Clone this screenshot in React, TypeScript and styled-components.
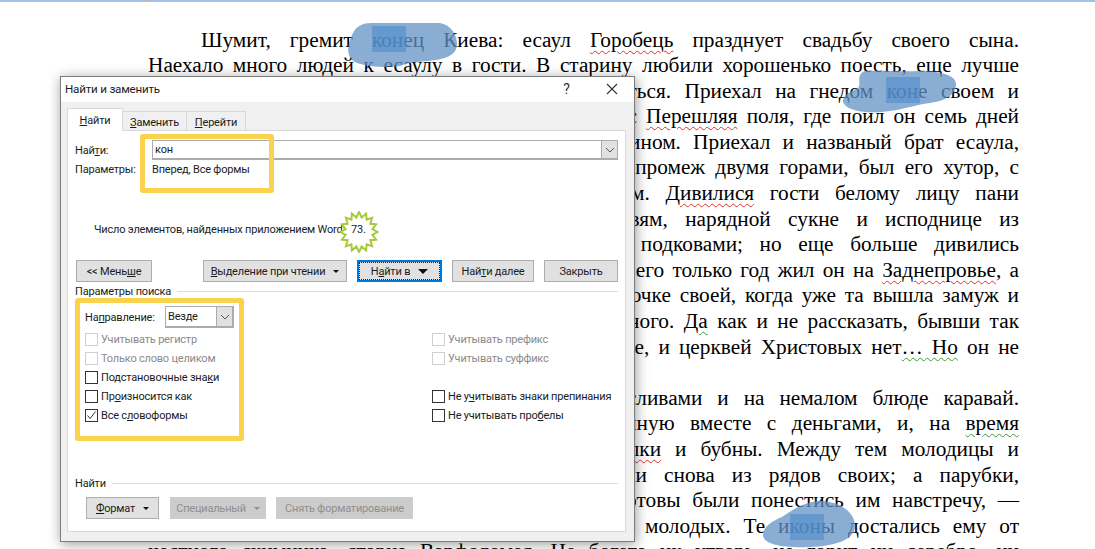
import React from 'react';
import styled, { createGlobalStyle } from 'styled-components';

const Global = createGlobalStyle`
  html, body { margin: 0; padding: 0; background: #ffffff; overflow: hidden; }
`;

const Page = styled.div`
  position: relative;
  width: 1095px;
  height: 549px;
  overflow: hidden;
  background: #ffffff;
`;

const TopBar = styled.div`
  height: 2px;
  background: #a3c1e9;
  padding-left: 143px;
`;

const RulerMark = styled.div`
  width: 9px;
  height: 2px;
  background: #b4bccb;
`;

// текст документа
const Doc = styled.div`
  width: 871px;
  margin-left: 148px;
  padding-top: 25.5px;
  font-family: "Liberation Serif", serif;
  font-size: 21.3px;
  line-height: 25.6px;
  color: #000000;
`;

const Line = styled.div<{ $indent?: boolean; $last?: boolean }>`
  height: 25.6px;
  text-align: justify;
  text-align-last: ${(p) => (p.$last ? 'left' : 'justify')};
  text-indent: ${(p) => (p.$indent ? '53px' : '0')};
`;

const Typo = styled.span<{ $color: string }>`
  text-decoration: underline wavy ${(p) => p.$color};
  text-decoration-thickness: 1px;
  text-underline-offset: 3px;
`;

const Overlay = styled.svg`
  position: absolute;
  left: 0;
  top: 0;
  pointer-events: none;
`;

const Dialog = styled.div`
  position: absolute;
  left: 60px;
  top: 76px;
  width: 575px;
  height: 466px;
  box-sizing: border-box;
  display: flex;
  flex-direction: column;
  background: #f0f0f0;
  border: 1px solid #7d7d7d;
  box-shadow: 1px 2px 12px rgba(0, 0, 0, 0.4);
  font-family: Roboto, sans-serif;
  font-size: 11px;
  letter-spacing: -0.2px;
  color: #1c1c1c;
  u { text-underline-offset: 1px; }
`;

const TitleBar = styled.div`
  height: 25px;
  box-sizing: border-box;
  padding: 0 0 2px 4px;
  flex: none;
  display: flex;
  align-items: center;
  background: #ffffff;
  font-size: 11.6px;
`;

const TitleText = styled.div`
  flex: 1;
`;

const TitleBtn = styled.div`
  width: 45px;
  display: flex;
  justify-content: center;
  align-items: center;
  font-size: 14px;
  color: #333333;
`;

const Tabs = styled.div`
  display: flex;
  align-items: flex-end;
  height: 29px;
  flex: none;
  padding-left: 6px;
  margin-bottom: -1px;
  position: relative;
  z-index: 1;
`;

const Tab = styled.div<{ $w: number; $active?: boolean }>`
  box-sizing: border-box;
  width: ${(p) => p.$w}px;
  height: ${(p) => (p.$active ? '23px' : '20px')};
  padding-top: ${(p) => (p.$active ? '3px' : '2px')};
  text-align: center;
  background: ${(p) => (p.$active ? '#ffffff' : '#f0f0f0')};
  border: 1px solid #d9d9d9;
  border-bottom: ${(p) => (p.$active ? 'none' : '1px solid #d9d9d9')};
  margin-left: ${(p) => (p.$active ? '0' : '-1px')};
  line-height: 17px;
`;

const Panel = styled.div`
  flex: 1;
  margin: 0 8px 9px 6px;
  padding: 9px 7px 0 7px;
  background: #ffffff;
  border: 1px solid #d9d9d9;
  display: flex;
  flex-direction: column;
`;

const FindRow = styled.div`
  display: flex;
  align-items: center;
  height: 20px;
`;

const FieldLabel = styled.div`
  width: 77px;
  flex: none;
`;

const Field = styled.div`
  flex: 1;
  height: 20px;
  box-sizing: border-box;
  border: 1px solid #acacac;
  border-width: 1px 1px 2px 1px;
  display: flex;
  align-items: center;
  padding-left: 2px;
`;

const FieldValue = styled.div`
  flex: 1;
`;

const ArrowBox = styled.div`
  width: 16px;
  height: 100%;
  box-sizing: border-box;
  background: #e1e1e1;
  border-left: 1px solid #acacac;
  display: flex;
  align-items: center;
  justify-content: center;
`;

const ParamsRow = styled.div`
  display: flex;
  align-items: center;
  height: 16px;
  margin-top: 1px;
`;

const CountRow = styled.div`
  position: relative;
  height: 16px;
  margin-top: 45px;
  margin-left: 19px;
  line-height: 16px;
`;

const CountValue = styled.span`
  position: absolute;
  left: 257px;
  top: 0;
  z-index: 1;
`;

const Star = styled.svg`
  position: absolute;
  left: 245px;
  top: -11px;
`;

const ButtonRow = styled.div`
  display: flex;
  margin: 22px 0 0 1px;
  height: 22px;
`;

const Button = styled.div<{ $w: number; $gap?: number; $disabled?: boolean }>`
  width: ${(p) => p.$w}px;
  margin-left: ${(p) => p.$gap ?? 0}px;
  box-sizing: border-box;
  display: flex;
  align-items: center;
  justify-content: center;
  gap: 8px;
  white-space: nowrap;
  background: ${(p) => (p.$disabled ? '#cccccc' : '#e1e1e1')};
  border: 1px solid ${(p) => (p.$disabled ? '#cccccc' : '#adadad')};
  color: ${(p) => (p.$disabled ? '#8f8f8f' : '#1c1c1c')};
`;

const FocusButton = styled(Button)`
  border: 2px solid #0078d7;
  outline: 1px dotted #222222;
  outline-offset: -3px;
`;

const Caret = styled.span<{ $small?: boolean; $disabled?: boolean }>`
  width: 0;
  height: 0;
  border-left: ${(p) => (p.$small ? 3 : 5)}px solid transparent;
  border-right: ${(p) => (p.$small ? 3 : 5)}px solid transparent;
  border-top: ${(p) => (p.$small ? 3 : 5)}px solid ${(p) => (p.$disabled ? '#8f8f8f' : '#111111')};
`;

const GroupHead = styled.div<{ $top: number }>`
  display: flex;
  align-items: center;
  height: 16px;
  margin-top: ${(p) => p.$top}px;
  gap: 6px;
  &::after {
    content: "";
    flex: 1;
    height: 1px;
    background: #dcdcdc;
  }
`;

const Options = styled.div`
  display: grid;
  grid-template-columns: 347px 1fr;
  margin-left: 10px;
  margin-top: 7px;
`;

const OptionCol = styled.div<{ $offset?: number }>`
  padding-top: ${(p) => p.$offset ?? 0}px;
`;

const DirRow = styled.div`
  display: flex;
  align-items: center;
  height: 22px;
  margin-bottom: 1.5px;
`;

const DirLabel = styled.div`
  width: 80px;
`;

const DirSelect = styled.div`
  width: 69px;
  height: 22px;
  box-sizing: border-box;
  border: 1px solid #acacac;
  border-width: 1px 2px 2px 1px;
  display: flex;
  align-items: center;
  padding-left: 2px;
`;

const Option = styled.div<{ $disabled?: boolean }>`
  display: flex;
  align-items: center;
  height: 19px;
  gap: 3px;
  white-space: nowrap;
  color: ${(p) => (p.$disabled ? '#8a8a8a' : '#1c1c1c')};
`;

const Box = styled.span<{ $disabled?: boolean }>`
  width: 13px;
  height: 13px;
  box-sizing: border-box;
  flex: none;
  border: 1px solid ${(p) => (p.$disabled ? '#cfcfcf' : '#333333')};
  display: flex;
  align-items: center;
  justify-content: center;
`;

const Spacer = styled.div`
  height: 19px;
`;

const FormatRow = styled.div`
  display: flex;
  height: 22px;
  margin-top: 6px;
  margin-left: 11px;
`;

const Frame = styled.div<{ $x: number; $y: number; $w: number; $h: number }>`
  position: absolute;
  left: ${(p) => p.$x}px;
  top: ${(p) => p.$y}px;
  width: ${(p) => p.$w}px;
  height: ${(p) => p.$h}px;
  box-sizing: border-box;
  border: 5.5px solid #fbd24e;
  border-radius: 3px;
`;

const Chevron = () => (
  <svg width="10" height="6" viewBox="0 0 10 6">
    <polyline points="1,1 5,5 9,1" fill="none" stroke="#555555" strokeWidth="1" />
  </svg>
);

const starPoints = () => {
  const pts: string[] = [];
  const n = 16;
  for (let i = 0; i < n * 2; i++) {
    const r = i % 2 === 0 ? 1 : 0.74;
    const a = (Math.PI * i) / n - Math.PI / 2;
    pts.push(`${(20 + 18.5 * r * Math.cos(a)).toFixed(1)},${(21 + 20 * r * Math.sin(a)).toFixed(1)}`);
  }
  return pts.join(' ');
};

const Red = '#e0312c';
const Green = '#3c9a3c';

export default function App() {
  return (
    <Page>
      <Global />
      <TopBar><RulerMark /></TopBar>
      <Doc>
        <Line $indent>Шумит, гремит конец Киева: есаул <Typo $color={Red}>Горобець</Typo> празднует свадьбу своего сына.</Line>
        <Line>Наехало много людей к есаулу в гости. В старину любили хорошенько поесть, еще лучше</Line>
        <Line>любили выпить, а еще лучше любили повеселиться. Приехал на гнедом коне своем и</Line>
        <Line>запорожец Микитка, прямо с разгульной попойки с <Typo $color={Red}>Перешляя</Typo> поля, где поил он семь дней</Line>
        <Line>и семь ночей королевских шляхтичей красным вином. Приехал и названый брат есаула,</Line>
        <Line>Данило Бурульбаш, с другого берега Днепра, где, промеж двумя горами, был его хутор, с</Line>
        <Line>молодою женою Катериною и с годовым сыном. <Typo $color={Red}>Дивилися</Typo> гости белому лицу пани</Line>
        <Line>Катерины, черными, как немецкий бархат, бровям, нарядной сукне и исподнице из</Line>
        <Line>голубого полутабенеку, сапогам с серебряными подковами; но еще больше дивились</Line>
        <Line>тому, что не приехал вместе с нею старый отец. Всего только год жил он на <Typo $color={Red}>Заднепровье</Typo>, а</Line>
        <Line>двадцать один пропадал без вести и воротился к дочке своей, когда уже та вышла замуж и</Line>
        <Line>родила сына. Он, верно, много порасказал бы дивного. <Typo $color={Green}>Да</Typo> как и не рассказать, бывши так</Line>
        <Line>долго в чужой земле! Там все не так: и люди не те, и церквей Христовых нет<Typo $color={Green}>… Но</Typo> он не</Line>
        <Line $last>приехал.</Line>
        <Line $indent>Гостям подносили варенуху с изюмом и сливами и на немалом блюде каравай.</Line>
        <Line>Музыканты принялись за исподнюю его, спеченную вместе с деньгами, и, на <Typo $color={Green}>время</Typo></Line>
        <Line>притихнув, положили возле себя цимбалы, <Typo $color={Red}>скрипки</Typo> и бубны. Между тем молодицы и</Line>
        <Line>дивчата, утершись, шитыми платками, выступали снова из рядов своих; а парубки,</Line>
        <Line>схватившись в боки, гордо глянув на стороны, готовы были понестись им навстречу, —</Line>
        <Line>как старый есаул вынес две иконы благословить молодых. Те иконы достались ему от</Line>
        <Line>честного схимника, старца Варфоломея. Не богата их утварь, не горит ни серебро, ни</Line>
      </Doc>

      <Overlay width="1095" height="549" viewBox="0 0 1095 549">
        <g fill="#6392c6" fillOpacity="0.75">
          <path d="M372 23 L440 23 C452 25 457 36 457 44 C457 54 448 58 436 60 C420 62 408 62 400 66 C385 68 360 67 352 60 C346 54 348 44 352 35 C356 26 362 23 372 23 Z" />
          <path d="M865 71 C885 70 900 72 920 71 C940 71 956 75 956 84 C956 95 945 101 930 103 C915 105 905 109 890 111 C870 114 850 112 844 104 C840 96 850 92 858 88 C862 84 855 75 865 71 Z" />
          <path d="M763 535 C763 527 772 521 782 517 C792 510 805 501 822 501 C840 502 855 512 855 526 C855 540 835 546 810 547 C785 548 763 545 763 535 Z" />
        </g>
        <g fill="#4f8ccb" fillOpacity="0.6">
          <rect x="372" y="26" width="34" height="26" />
          <rect x="886" y="77" width="34" height="26" />
          <rect x="790" y="514" width="34" height="26" />
        </g>
      </Overlay>

      <Dialog>
        <TitleBar>
          <TitleText>Найти и заменить</TitleText>
          <TitleBtn>?</TitleBtn>
          <TitleBtn>
            <svg width="12" height="12" viewBox="0 0 12 12">
              <path d="M1 1 L11 11 M11 1 L1 11" stroke="#333333" strokeWidth="1.1" fill="none" />
            </svg>
          </TitleBtn>
        </TitleBar>
        <Tabs>
          <Tab $w={56} $active><u>Н</u>айти</Tab>
          <Tab $w={65}><u>З</u>аменить</Tab>
          <Tab $w={60}><u>П</u>ерейти</Tab>
        </Tabs>
        <Panel>
          <FindRow>
            <FieldLabel>Най<u>т</u>и:</FieldLabel>
            <Field>
              <FieldValue>кон</FieldValue>
              <ArrowBox><Chevron /></ArrowBox>
            </Field>
          </FindRow>
          <ParamsRow>
            <FieldLabel>Параметры:</FieldLabel>
            <div>Вперед, Все формы</div>
          </ParamsRow>
          <CountRow>
            Число элементов, найденных приложением Word:
            <Star width="40" height="42" viewBox="0 0 40 42">
              <polygon points={starPoints()} fill="#ffffff" stroke="#a8c93c" strokeWidth="2" />
            </Star>
            <CountValue>73.</CountValue>
          </CountRow>
          <ButtonRow>
            <Button $w={76}><span>&lt;&lt; Мень<u>ш</u>е</span></Button>
            <Button $w={144} $gap={51}><span><u>В</u>ыделение при чтении</span><Caret $small /></Button>
            <FocusButton $w={85} $gap={10}><span>Н<u>а</u>йти в</span><Caret /></FocusButton>
            <Button $w={82} $gap={10}><span>Най<u>т</u>и далее</span></Button>
            <Button $w={74} $gap={10}>Закрыть</Button>
          </ButtonRow>
          <GroupHead $top={1}>Параметры поиска</GroupHead>
          <Options>
            <OptionCol>
              <DirRow>
                <DirLabel>На<u>п</u>равление:</DirLabel>
                <DirSelect>
                  <FieldValue>Везде</FieldValue>
                  <ArrowBox><Chevron /></ArrowBox>
                </DirSelect>
              </DirRow>
              <Option $disabled><Box $disabled /><span>Учитывать регистр</span></Option>
              <Option $disabled><Box $disabled /><span>Только слово целиком</span></Option>
              <Option><Box /><span>Подстановочные зна<u>к</u>и</span></Option>
              <Option><Box /><span>Пр<u>о</u>износится как</span></Option>
              <Option>
                <Box>
                  <svg width="11" height="11" viewBox="0 0 11 11">
                    <polyline points="1.5,5.5 4.2,8.5 9.5,1.5" fill="none" stroke="#333333" strokeWidth="1" />
                  </svg>
                </Box>
                <span>Все с<u>л</u>овоформы</span>
              </Option>
            </OptionCol>
            <OptionCol $offset={23.5}>
              <Option $disabled><Box $disabled /><span>Учитывать префикс</span></Option>
              <Option $disabled><Box $disabled /><span>Учитывать суффикс</span></Option>
              <Spacer />
              <Option><Box /><span>Не у<u>ч</u>итывать знаки препинания</span></Option>
              <Option><Box /><span>Не учитывать про<u>б</u>елы</span></Option>
            </OptionCol>
          </Options>
          <GroupHead $top={50.5}>Найти</GroupHead>
          <FormatRow>
            <Button $w={73}><span><u>Ф</u>ормат</span><Caret $small /></Button>
            <Button $w={96} $gap={11} $disabled><span>Специальный</span><Caret $small $disabled /></Button>
            <Button $w={137} $gap={10} $disabled>Снять форматирование</Button>
          </FormatRow>
        </Panel>
        <Frame $x={78.5} $y={56.5} $w={134} $h={59} />
        <Frame $x={13.5} $y={220.5} $w={169} $h={143} />
      </Dialog>
    </Page>
  );
}
